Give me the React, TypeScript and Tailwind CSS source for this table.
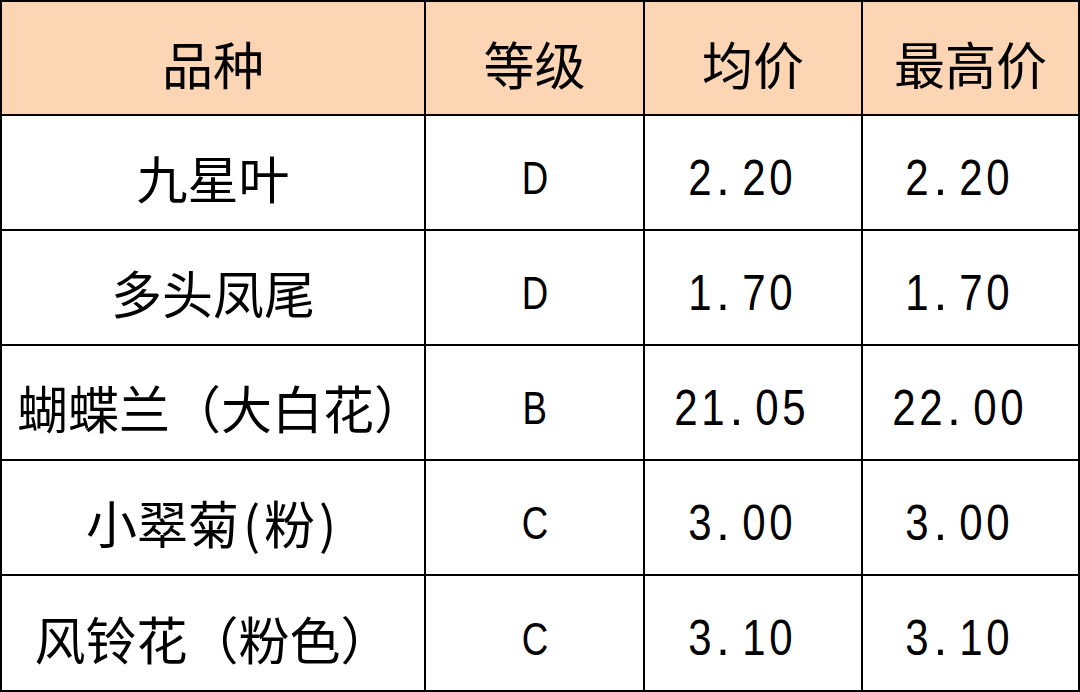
import React from "react";

const rows: [string, string, string, string][] = [
  ["九星叶", "D", "2.20", "2.20"],
  ["多头凤尾", "D", "1.70", "1.70"],
  ["蝴蝶兰（大白花）", "B", "21.05", "22.00"],
  ["小翠菊(粉)", "C", "3.00", "3.00"],
  ["风铃花（粉色）", "C", "3.10", "3.10"],
];

const cjk = "font-['Noto_Sans_CJK_SC','Noto_Sans_CJK_JP',sans-serif]";

function Num({ v }: { v: string }) {
  return (
    <span className="inline-flex font-['Liberation_Sans',Arial,sans-serif] text-[50px] leading-none">
      {(v + " ").split("").map((c, i) =>
        c === "." ? (
          <span key={i} className="inline-block w-[27px] text-center -translate-x-[3px]">
            .
          </span>
        ) : (
          <span key={i} className="inline-block w-[27px] text-center scale-x-[0.84]">
            {c === " " ? "\u00a0" : c}
          </span>
        )
      )}
    </span>
  );
}

function Letter({ v }: { v: string }) {
  return (
    <span className="inline-block font-['Liberation_Sans',Arial,sans-serif] text-[47px] leading-none scale-x-[0.78]">
      {v}
    </span>
  );
}

function Zh({ v, shift }: { v: string; shift?: boolean }) {
  return (
    <span className={`${cjk} inline-flex text-[51px] leading-none ${shift ? "translate-x-[8px]" : ""}`}>
      {v.split("").map((c, i) =>
        c === "(" || c === ")" ? (
          <span key={i} className="inline-block w-[25px] text-center">
            {c}
          </span>
        ) : (
          <span key={i}>{c}</span>
        )
      )}
    </span>
  );
}

function Cell({ children, head }: { children: React.ReactNode; head?: boolean }) {
  return (
    <div
      className={`flex items-center justify-center pt-[10px] text-black ${head ? "bg-[#fcd5b4]" : "bg-white"}`}
    >
      {children}
    </div>
  );
}

export default function App() {
  return (
    <div className="w-[1080px] h-[692px] bg-black p-[2px] grid grid-cols-[422px_217px_216px_215px] grid-rows-[112px_113px_113px_113px_113px_114px] gap-[2px]">
      {["品种", "等级", "均价", "最高价"].map((h) => (
        <Cell key={h} head>
          <Zh v={h} />
        </Cell>
      ))}
      {rows.map((r) => (
        <React.Fragment key={r[0]}>
          <Cell>
            <Zh v={r[0]} shift={r[0].startsWith("蝴")} />
          </Cell>
          <Cell>
            <Letter v={r[1]} />
          </Cell>
          <Cell>
            <Num v={r[2]} />
          </Cell>
          <Cell>
            <Num v={r[3]} />
          </Cell>
        </React.Fragment>
      ))}
    </div>
  );
}
